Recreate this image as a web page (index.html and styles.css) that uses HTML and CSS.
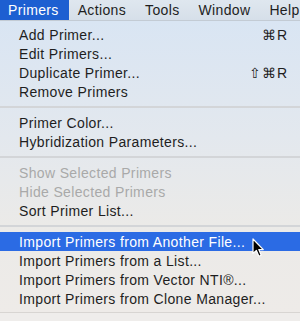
FILE: index.html
```html
<!DOCTYPE html>
<html lang="en">
<head>
    <meta charset="UTF-8">
    <title>Primers menu</title>
    <link rel="stylesheet" href="styles.css">
</head>
<body>

<div class="menubar">
    <span class="title active">Primers</span>
    <span class="title">Actions</span>
    <span class="title">Tools</span>
    <span class="title">Window</span>
    <span class="title">Help</span>
</div>

<div class="menu">
    <div class="item"><span>Add Primer...</span><span class="key">⌘R</span></div>
    <div class="item"><span>Edit Primers...</span></div>
    <div class="item"><span>Duplicate Primer...</span><span class="key">⇧⌘R</span></div>
    <div class="item"><span>Remove Primers</span></div>
    <div class="sep"></div>
    <div class="item"><span>Primer Color...</span></div>
    <div class="item"><span>Hybridization Parameters...</span></div>
    <div class="sep"></div>
    <div class="item disabled"><span>Show Selected Primers</span></div>
    <div class="item disabled"><span>Hide Selected Primers</span></div>
    <div class="item"><span>Sort Primer List...</span></div>
    <div class="sep"></div>
    <div class="item selected">
        <span>Import Primers from Another File...</span>
        <!-- mouse pointer -->
        <svg class="cursor" width="13" height="20" viewBox="0 0 13 20">
            <path d="M1 1 L1 15.5 L4.4 12.4 L6.9 18.2 L9.2 17.2 L6.8 11.6 L11.3 11.6 Z" fill="#000" stroke="#fff" stroke-width="1.2" stroke-linejoin="round"/>
        </svg>
    </div>
    <div class="item"><span>Import Primers from a List...</span></div>
    <div class="item"><span>Import Primers from Vector NTI®...</span></div>
    <div class="item"><span>Import Primers from Clone Manager...</span></div>
</div>

</body>
</html>
```

FILE: styles.css
```css
body {
    margin: 0;
    width: 300px;
    height: 321px;
    overflow: hidden;
    background-color: #efedeb;
    font-family: "Liberation Sans", Arial, sans-serif;
    font-size: 14px;
    letter-spacing: 0.35px;
    color: #1e1e1e;
}
.menubar {
    display: flex;
    height: 21px;
    background: linear-gradient(#dfe7ef, #d6dfe9);
    border-bottom: 1px solid #c3cbd4;
    box-sizing: border-box;
    white-space: nowrap;
}
.title {
    display: flex;
    align-items: center;
    padding: 0 10px 0 9px;
    line-height: 21px;
    height: 20px;
}
.title:first-child {
    padding-left: 8px;
}
.title.active {
    background-color: #1d5fd1;
    color: #fff;
}
.menu {
    position: relative;
    height: 292px;
    padding: 4px 0 0 0;
    box-sizing: border-box;
    background: linear-gradient(#d9e5f3 0%, #e3e8ee 40%, #ebeae8 70%, #eeebe8 100%);
    border-bottom: 1px solid #d8d5d2;
}
.item {
    position: relative;
    display: flex;
    justify-content: space-between;
    align-items: center;
    height: 19px;
    padding: 0 12px 0 19px;
    white-space: nowrap;
}
.item .key {
    letter-spacing: 1px;
}
.item.disabled {
    color: #a9a9a9;
}
.item.selected {
    background-color: #2b6be4;
    color: #fff;
}
.sep {
    height: 2px;
    margin: 5px 0;
    background-color: #d3d5d8;
}
.cursor {
    position: absolute;
    left: 252px;
    top: 6px;
}
```
